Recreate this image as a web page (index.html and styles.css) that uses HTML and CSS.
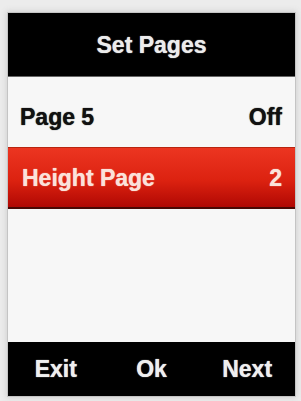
FILE: index.html
```html
<!DOCTYPE html>
<html>
	<head>
		<meta charset="UTF-8">
		<title>Set Pages</title>
		<link rel="stylesheet" href="styles.css">
	</head>
	<body>
		<div id="screen">
			<div class="title">Set Pages</div>
			<ul class="menu">
				<li class="row">
					<span>Page 5</span>
					<span>Off</span>
				</li>
				<li class="row active">
					<span>Height Page</span>
					<span>2</span>
				</li>
			</ul>
			<div class="keys">
				<span>Exit</span>
				<span>Ok</span>
				<span>Next</span>
			</div>
		</div>
	</body>
</html>
```

FILE: styles.css
```css
body,ul,li{
	padding: 0;
	margin: 0;
}
body{
	width: 301px;
	height: 401px;
	overflow: hidden;
	background-color: #ececec;
	font-family: "Liberation Sans", Arial, sans-serif;
	font-weight: bold;
	font-size: 23px;
}
#screen{
	width: 287px;
	height: 383px;
	margin: 13px 0 0 8px;
	display: flex;
	flex-direction: column;
	background-color: #f7f7f7;
	box-shadow: 0 0 0 1px #c4c4c4, 0 0 6px 2px #d2d2d2;
}
.title{
	height: 64px;
	line-height: 64px;
	text-align: center;
	color: #ececec;
	background-color: #000;
	border-bottom: 1px solid #666;
	box-sizing: border-box;
	text-shadow: 0 0 1px #ececec;
}
.menu{
	list-style: none;
	flex: 1;
}
.row{
	display: flex;
	justify-content: space-between;
	align-items: center;
	height: 70px;
	padding: 10px 13px 0 12px;
	box-sizing: border-box;
	color: #111;
	text-shadow: 0 0 1px #111;
}
.row.active{
	height: 62px;
	padding: 2px 13px 0 14px;
	color: #fbe2da;
	text-shadow: 0 0 1px #fbe2da;
	background: linear-gradient(#ec3521, #dc2210 55%, #b00803);
	border-top: 1px solid #b8250f;
	border-bottom: 2px solid #4a0804;
}
.keys{
	height: 54px;
	display: grid;
	grid-template-columns: 1fr 1fr 1fr;
	align-items: center;
	text-align: center;
	color: #efefef;
	background-color: #000;
	text-shadow: 0 0 1px #efefef;
}
```
